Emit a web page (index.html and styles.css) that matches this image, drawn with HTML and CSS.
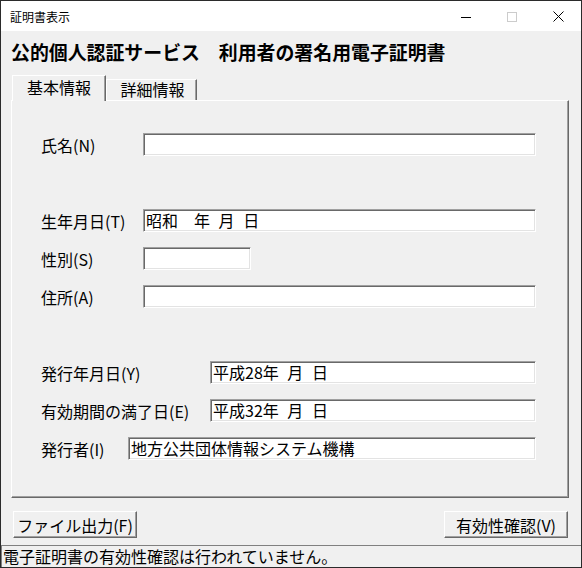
FILE: index.html
```html
<!DOCTYPE html>
<html lang="ja">
<head>
<meta charset="utf-8">
<title>証明書表示</title>
<link rel="stylesheet" href="styles.css">
</head>
<body>
<div class="window">
  <div class="titlebar">
    <span class="title">証明書表示</span>
    <div class="controls">
      <span class="ctl"><svg width="10" height="10" viewBox="0 0 10 10"><path d="M0 5.5H10" stroke="#000" stroke-width="1"/></svg></span>
      <span class="ctl"><svg width="10" height="10" viewBox="0 0 10 10"><rect x="0.5" y="0.5" width="9" height="9" fill="none" stroke="#cccccc" stroke-width="1"/></svg></span>
      <span class="ctl"><svg width="11" height="11" viewBox="0 0 11 11"><path d="M0.5 0.5L10.5 10.5M10.5 0.5L0.5 10.5" stroke="#000" stroke-width="1"/></svg></span>
    </div>
  </div>
  <div class="client">
    <div class="content">
      <h1 class="heading">公的個人認証サービス　利用者の署名用電子証明書</h1>
      <div class="tabs">
        <div class="tab active">基本情報</div>
        <div class="tab">詳細情報</div>
      </div>
      <div class="panel">
        <div class="row">
          <span class="label w102">氏名(N)</span>
          <div class="field"></div>
        </div>
        <div class="row spaced">
          <span class="label w102">生年月日(T)</span>
          <div class="field date">昭和　年 月 日</div>
        </div>
        <div class="row">
          <span class="label w102">性別(S)</span>
          <div class="field short"></div>
        </div>
        <div class="row">
          <span class="label w102">住所(A)</span>
          <div class="field"></div>
        </div>
        <div class="row spaced">
          <span class="label w169">発行年月日(Y)</span>
          <div class="field date">平成28年 月 日</div>
        </div>
        <div class="row">
          <span class="label w169">有効期間の満了日(E)</span>
          <div class="field date">平成32年 月 日</div>
        </div>
        <div class="row">
          <span class="label w87">発行者(I)</span>
          <div class="field">地方公共団体情報システム機構</div>
        </div>
      </div>
      <div class="buttons">
        <button class="btn">ファイル出力(F)</button>
        <button class="btn">有効性確認(V)</button>
      </div>
    </div>
    <div class="status">電子証明書の有効性確認は行われていません。</div>
  </div>
</div>
</body>
</html>
```

FILE: styles.css
```css
* { box-sizing: border-box; }
html, body {
  margin: 0;
  padding: 0;
  background: #ffffff;
}
body {
  font-family: "Noto Sans CJK JP", "Noto Sans", sans-serif;
  color: #000;
}
.window {
  width: 582px;
  height: 568px;
  border: 1px solid #2b2b2b;
  display: flex;
  flex-direction: column;
  background: #f0f0f0;
}
.titlebar {
  height: 30px;
  flex: none;
  background: #ffffff;
  display: flex;
  align-items: center;
  justify-content: space-between;
}
.title {
  font-size: 12px;
  line-height: 16px;
  padding-left: 9px;
  padding-top: 2px;
}
.controls {
  display: flex;
  height: 100%;
}
.ctl {
  width: 46px;
  height: 100%;
  display: flex;
  align-items: center;
  justify-content: center;
  padding-top: 1px;
}
.client {
  flex: 1;
  display: flex;
  flex-direction: column;
  background: #f0f0f0;
}
.content {
  flex: 1;
  padding: 9px 12px 0 10px;
  display: flex;
  flex-direction: column;
}
.heading {
  margin: 0;
  font-size: 18.9px;
  font-weight: 700;
  line-height: 24px;
  height: 24px;
  white-space: nowrap;
}
.tabs {
  margin-top: 11px;
  height: 25px;
  display: flex;
  align-items: flex-end;
}
.tab {
  height: 21px;
  width: 91px;
  font-size: 16px;
  line-height: 18px;
  text-align: center;
  border-top: 1px solid #ffffff;
  border-left: 1px solid #ffffff;
  border-right: 1px solid #696969;
  box-shadow: inset -1px 0 0 #a0a0a0;
  background: #f0f0f0;
  padding-left: 2px;
}
.tab.active {
  position: relative;
  z-index: 1;
  height: 26px;
  width: 94px;
  margin-left: 1px;
  margin-bottom: -1px;
  line-height: 22px;
  padding-left: 0;
}
.panel {
  height: 398px;
  border-top: 1px solid #ffffff;
  border-left: 1px solid #ffffff;
  border-right: 1px solid #696969;
  border-bottom: 1px solid #696969;
  box-shadow: inset -1px -1px 0 #a0a0a0;
  padding: 32px 32px 0 29px;
}
.row {
  display: flex;
  align-items: center;
  height: 23px;
  margin-top: 15px;
}
.row:first-child { margin-top: 0; }
.row.spaced { margin-top: 53px; }
.label {
  flex: none;
  font-size: 16px;
  line-height: 20px;
  white-space: nowrap;
}
.w102 { width: 102px; }
.w169 { width: 169px; }
.w87 { width: 87px; }
.field {
  flex: 1;
  height: 23px;
  background: #ffffff;
  border-top: 1px solid #a0a0a0;
  border-left: 1px solid #a0a0a0;
  border-right: 1px solid #ffffff;
  border-bottom: 1px solid #ffffff;
  box-shadow: inset 1px 1px 0 #696969, inset -1px -1px 0 #e3e3e3;
  font-size: 16px;
  line-height: 20px;
  padding-left: 2px;
  white-space: nowrap;
  overflow: hidden;
}
.field.short {
  flex: none;
  width: 108px;
}
.field.date { word-spacing: 5px; }
.buttons {
  margin-top: 13px;
  display: flex;
  justify-content: space-between;
  padding: 0 1px 0 2px;
}
.btn {
  width: 124px;
  height: 27px;
  margin: 0;
  padding: 0;
  font-family: "Noto Sans CJK JP", "Noto Sans", sans-serif;
  font-size: 16px;
  line-height: 20px;
  color: #000;
  background: #f0f0f0;
  border-top: 1px solid #ffffff;
  border-left: 1px solid #ffffff;
  border-right: 1px solid #696969;
  border-bottom: 1px solid #696969;
  box-shadow: inset -1px -1px 0 #a0a0a0;
}
.status {
  flex: none;
  height: 22px;
  border-top: 1px solid #808080;
  border-left: 1px solid #808080;
  font-size: 16px;
  line-height: 20px;
  padding-left: 1px;
  white-space: nowrap;
}
```
